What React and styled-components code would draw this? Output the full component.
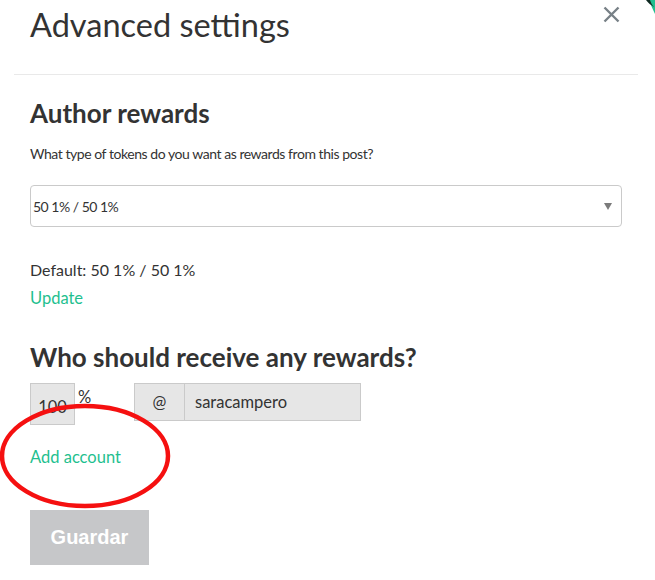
import React from "react";
import styled, { createGlobalStyle } from "styled-components";

const Global = createGlobalStyle`
  html, body { margin: 0; padding: 0; background: #fff; }
  body { font-family: "Lato", "Open Sans", sans-serif; color: #333; }
  * { box-sizing: border-box; }
`;

const Modal = styled.div`
  position: relative;
  width: 655px;
  height: 580px;
  overflow: hidden;
  background: #fff;
`;

const CornerMark = styled.svg`
  position: absolute;
  top: 0;
  right: 0;
`;

const Header = styled.div`
  display: flex;
  justify-content: space-between;
  align-items: flex-start;
  margin: 0 17px 0 14px;
  height: 75px;
  border-bottom: 1px solid #e9e9e9;
`;

const Title = styled.h1`
  margin: 5px 0 0 16px;
  font-size: 32.5px;
  font-weight: 400;
  line-height: 40px;
  color: #333;
`;

const Close = styled.button`
  border: 0;
  background: none;
  padding: 0;
  margin: 6px 18px 0 0;
  width: 17px;
  height: 17px;
  cursor: pointer;
  display: flex;
`;

const Body = styled.div`
  padding: 22px 33px 0 30px;
`;

const Heading = styled.h2`
  margin: ${(p) => p.$m || "0"};
  font-size: 26px;
  font-weight: 700;
  line-height: 32px;
  color: #333;
`;

const Hint = styled.p`
  margin: 14px 0 0;
  font-size: 14px;
  letter-spacing: -0.45px;
  line-height: 22px;
  color: #333;
`;

const Text = styled.p`
  margin: ${(p) => p.$m || "0"};
  font-size: 16px;
  line-height: 22px;
  color: #333;
`;

const SelectBox = styled.div`
  margin-top: 20px;
  height: 42px;
  border: 1px solid #cacaca;
  border-radius: 4px;
  display: flex;
  align-items: center;
  padding: 0 9px 0 2px;
  font-size: 14px;
  letter-spacing: -0.5px;
  color: #333;
`;

const Arrow = styled.span`
  margin-left: auto;
  width: 0;
  height: 0;
  border-left: 4px solid transparent;
  border-right: 4px solid transparent;
  border-top: 7px solid #7b7b7b;
`;

const Link = styled.a`
  display: block;
  margin: ${(p) => p.$m || "0"};
  color: #1fbf8f;
  font-size: 16.5px;
  line-height: 22px;
  text-decoration: none;
`;

const Row = styled.div`
  display: flex;
  align-items: flex-start;
  margin-top: 10px;
`;

const PercentBox = styled.div`
  width: 45px;
  height: 42px;
  background: #e6e6e6;
  border: 1px solid #cacaca;
  display: flex;
  align-items: center;
  justify-content: center;
  padding-top: 6px;
  font-size: 16.5px;
  color: #333;
  overflow: hidden;
`;

const Unit = styled.span`
  font-size: 16.5px;
  line-height: 22px;
  margin: 3px 0 0 3px;
  width: 56px;
`;

const Group = styled.div`
  display: flex;
  height: 38px;
  border: 1px solid #cacaca;
  background: #e6e6e6;
`;

const Addon = styled.div`
  width: 50px;
  display: flex;
  align-items: center;
  justify-content: center;
  border-right: 1px solid #cacaca;
  font-size: 16.5px;
`;

const UserField = styled.div`
  width: 175px;
  display: flex;
  align-items: center;
  padding-left: 10px;
  font-size: 16.5px;
`;

const AddWrap = styled.div`
  position: relative;
  margin-top: 9px;
  height: 45px;
  display: flex;
  align-items: center;
`;

const Ring = styled.svg`
  position: absolute;
  left: -31px;
  top: -34px;
  pointer-events: none;
`;

const Save = styled.button`
  margin-top: 31px;
  width: 119px;
  height: 55px;
  border: 0;
  background: #c6c7c9;
  color: #fff;
  font-family: "Liberation Sans", Arial, sans-serif;
  font-weight: 700;
  font-size: 20px;
`;

export default function App() {
  return (
    <Modal>
      <Global />
      <CornerMark width="12" height="14" viewBox="0 0 12 14">
        <path d="M6 0 L12 0 L12 14 C10 10 8 5 6 0 Z" fill="#1fbf8f" />
        <path d="M3 0 L7 0 C8 3 9 5 11 7 C8 5 5 3 3 0 Z" fill="#0f2a22" />
      </CornerMark>
      <Header>
        <Title>Advanced settings</Title>
        <Close aria-label="Close">
          <svg width="17" height="17" viewBox="0 0 17 17">
            <path d="M1.5 1.5 L15.5 15.5 M15.5 1.5 L1.5 15.5" stroke="#788187" strokeWidth="2.4" />
          </svg>
        </Close>
      </Header>
      <Body>
        <Heading>Author rewards</Heading>
        <Hint>What type of tokens do you want as rewards from this post?</Hint>
        <SelectBox>
          50 1% / 50 1%
          <Arrow />
        </SelectBox>
        <Text $m="32px 0 0">Default: 50 1% / 50 1%</Text>
        <Link href="#" $m="6px 0 0">Update</Link>
        <Heading $m="32px 0 0">Who should receive any rewards?</Heading>
        <Row>
          <PercentBox>100</PercentBox>
          <Unit>%</Unit>
          <Group>
            <Addon>@</Addon>
            <UserField>saracampero</UserField>
          </Group>
        </Row>
        <AddWrap>
          <Ring width="178" height="114" viewBox="0 0 178 114">
            <ellipse cx="86" cy="56" rx="83" ry="50" fill="none" stroke="#f51010" strokeWidth="4.5" />
          </Ring>
          <Link href="#">Add account</Link>
        </AddWrap>
        <Save>Guardar</Save>
      </Body>
    </Modal>
  );
}
